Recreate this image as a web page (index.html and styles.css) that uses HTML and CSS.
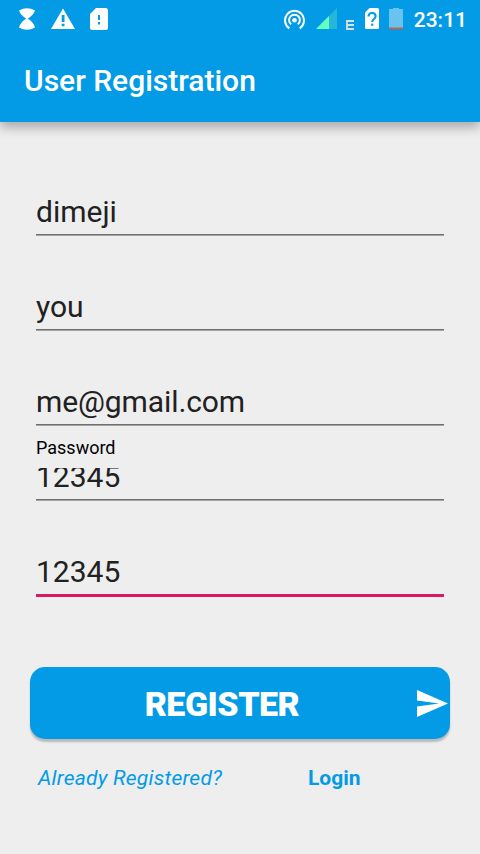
FILE: index.html
```html
<!DOCTYPE html>
<html lang="en">
  <head>
    <meta charset="UTF-8" />
    <meta name="viewport" content="width=device-width, initial-scale=1.0" />
    <title>User Registration</title>
    <link rel="stylesheet" href="styles.css">
  </head>
  <body>
    <header class="header">
      <div class="status-bar">
        <div class="status-left">
          <svg class="icon-hourglass" width="18" height="22" viewBox="0 0 18 22">
            <path d="M1 2.600Q9-2 17 2.600Q15.500 7 9.800 10.800Q15 13.500 17 19.400Q9 24 1 19.400Q3 13.500 8.200 10.800Q2.500 7 1 2.600Z" fill="#fff" />
          </svg>
          <svg class="icon-warning" width="24" height="22" viewBox="0 0 24 22">
            <path d="M12 0.500L24 21H0Z" fill="#fff" />
            <path d="M10.700 7h2.800v7h-2.800zM10.700 15.700h2.800v2.600h-2.800z" fill="#039be5" />
          </svg>
          <svg class="icon-sd" width="18" height="22" viewBox="0 0 18 22">
            <path d="M6 0H15.500Q18 0 18 2.500V19.500Q18 22 15.500 22H2.500Q0 22 0 19.500V6Z" fill="#fff" />
            <path d="M8 7h2v5H8zM8 14h2v2.500H8z" fill="#039be5" />
          </svg>
        </div>
        <div class="status-right">
          <svg class="icon-hotspot" width="22" height="21" viewBox="0 0 22 21">
            <g fill="none" stroke="#fff" stroke-width="2">
              <path d="M6.300 19.300A9.500 9.500 0 1 1 16.700 19.300" />
              <path d="M8.200 15.300A5.400 5.400 0 1 1 14.800 15.300" />
            </g>
            <circle cx="11.500" cy="11.300" r="2.300" fill="#fff" />
          </svg>
          <svg class="icon-signal" width="21" height="21" viewBox="0 0 21 21">
            <path d="M0 21L21 0V21Z" fill="#27b6da" />
            <path d="M0 21L13 8V21Z" fill="#64ffbe" />
          </svg>
          <svg class="icon-edge" width="8" height="10" viewBox="0 0 8 10">
            <path d="M8 1H1V9H8M1 5H8" fill="none" stroke="#dadfe2" stroke-width="1.800" />
          </svg>
          <svg class="icon-sim" width="14" height="21" viewBox="0 0 14 21">
            <path d="M4.500 0H12.500Q14 0 14 1.500V19.500Q14 21 12.500 21H1.500Q0 21 0 19.500V4.500Z" fill="#fff" />
            <path d="M3.500 8.500Q3.500 5 7 5Q10.600 5 10.600 8.300Q10.600 9.800 9 11Q7.200 12.300 7.200 14" fill="none" stroke="#039be5" stroke-width="2.100" />
            <path d="M6.100 15.600h2.200v2.200h-2.200z" fill="#039be5" />
          </svg>
          <svg class="icon-battery" width="14" height="22" viewBox="0 0 14 22">
            <path d="M4 -1H10V1H14V20H0V1H4Z" fill="#68c3ef" />
            <path d="M0 19.500H14V21.300H0Z" fill="#d1603d" />
          </svg>
          <span class="clock">23:11</span>
        </div>
      </div>
      <h1 class="title">User Registration</h1>
    </header>

    <form class="form">
      <div class="field">
        <input type="text" value="dimeji" />
      </div>
      <div class="field">
        <input type="text" value="you" />
      </div>
      <div class="field">
        <input class="email" type="text" value="me@gmail.com" />
      </div>
      <div class="field labelled">
        <label for="password">Password</label>
        <div class="clip">
          <input id="password" type="text" value="12345" />
        </div>
      </div>
      <div class="field active">
        <input type="text" value="12345" />
      </div>

      <button type="button" class="register">
        <span class="register-text">REGISTER</span>
        <svg class="icon-send" width="31" height="27" viewBox="0 0 31 27">
          <path d="M0 0L31 13.500L0 27V16.500L22 13.500L0 10.500Z" fill="#fff" />
        </svg>
      </button>

      <div class="links">
        <span class="hint">Already Registered?</span>
        <a class="login">Login</a>
      </div>
    </form>
  </body>
</html>
```

FILE: styles.css
```css
/* Resets */
* {
  box-sizing: border-box;
}
body {
  margin: 0;
  height: 854px;
  background-color: #eee;
  font-family: Roboto, sans-serif;
  overflow: hidden;
}

/* Header */
.header {
  height: 122px;
  background-color: #039be5;
  color: #fff;
  box-shadow: 0 6px 10px rgba(0, 0, 0, 0.27);
}
.status-bar {
  display: flex;
  justify-content: space-between;
  height: 38px;
  padding: 8px 13px 0 18px;
}
.status-left,
.status-right {
  display: flex;
  align-items: flex-start;
}
.icon-warning {
  margin-left: 15px;
}
.icon-sd {
  margin-left: 15px;
}
.icon-hotspot {
  margin-top: 1px;
}
.icon-signal {
  margin-left: 11px;
}
.icon-edge {
  margin: 12px 0 0 9px;
}
.icon-sim {
  margin-left: 11px;
}
.icon-battery {
  margin-left: 10px;
}
.clock {
  margin-left: 11px;
  font-size: 21px;
  font-weight: 500;
  line-height: 24px;
}
.title {
  margin: 0;
  padding: 23px 24px 0;
  font-size: 30px;
  font-weight: 500;
  line-height: 40px;
}

/* Fields */
.form {
  padding-top: 19px;
}
.field {
  height: 95px;
  padding: 51px 36px 0;
}
.field input {
  display: block;
  width: 100%;
  height: 43px;
  padding: 0 0 4px;
  border: 0;
  border-bottom: 1px solid #6f6f6f;
  border-radius: 0;
  box-shadow: 0 1px #a3a3a3;
  background: none;
  color: #212121;
  font-family: inherit;
  font-size: 30px;
  line-height: 38px;
  outline: none;
}
.field .email {
  letter-spacing: -0.1px;
}
.labelled {
  height: 75px;
  padding-top: 12px;
}
.labelled label {
  display: block;
  height: 30px;
  color: #000;
  font-size: 18px;
  line-height: 20px;
}
.clip {
  display: flex;
  align-items: flex-end;
  height: 33px;
  padding-bottom: 1px;
  overflow: hidden;
}
.clip input {
  flex-shrink: 0;
}
.active input {
  height: 45px;
  border-bottom: 3px solid #d81b60;
  box-shadow: none;
}

/* Button */
.register {
  display: flex;
  align-items: center;
  width: 420px;
  height: 72px;
  margin: 71px 30px 0;
  padding: 0 2px 0 0;
  border: 0;
  border-radius: 15px;
  background-color: #039be5;
  box-shadow: 0 3px 2px rgba(0, 0, 0, 0.22);
  color: #fff;
  font-family: inherit;
}
.register-text {
  flex: 1;
  padding: 2px 3px 0 0;
  font-size: 34px;
  font-weight: 900;
  letter-spacing: -0.5px;
}

/* Links */
.links {
  display: flex;
  padding: 27px 38px 0;
  color: #039be5;
  font-size: 21px;
  line-height: 24px;
}
.hint {
  width: 270px;
  font-style: italic;
  letter-spacing: 0.24px;
}
.login {
  font-weight: 700;
}
```
